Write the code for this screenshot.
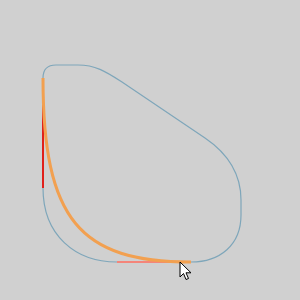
import React from "react";

// outline of the shape being edited, plus the highlighted segment being dragged
const outline =
  "M 43 78 Q 43 65 56 65 L 78 65 C 95 65 105 71 122 82 L 205 138 C 230 155 241 175 241 200 L 241 215 C 241 245 220 262 191 262 L 117 262 C 75 262 43 235 43 188 Z";

const dragged = "M 43 78 C 43 220 80 262 191 262";

const Cursor = () => (
  <svg width="14" height="22" viewBox="0 0 14 22" className="absolute left-[179px] top-[261px]">
    <path
      d="M1 1 L1 16 L4.5 12.5 L7 18.5 L9.5 17.5 L7 11.8 L12 11.8 Z"
      fill="#fff"
      stroke="#000"
      strokeWidth="1"
      strokeLinejoin="miter"
    />
  </svg>
);

export const App: React.FunctionComponent = () => {
  return (
    <div className="relative w-[300px] h-[300px] bg-[#d0d0d0] overflow-hidden">
      <svg width="300" height="300" viewBox="0 0 300 300" className="block">
        <path d={outline} fill="none" stroke="#7ea6ba" strokeWidth="1.2" />
        <line x1="43" y1="78" x2="43" y2="188" stroke="#e0201a" strokeWidth="2" />
        <line x1="117" y1="262" x2="191" y2="262" stroke="#f4857a" strokeWidth="2" />
        <path d={dragged} fill="none" stroke="#f2a050" strokeWidth="3" />
      </svg>
      <Cursor />
    </div>
  );
};

export default App;
